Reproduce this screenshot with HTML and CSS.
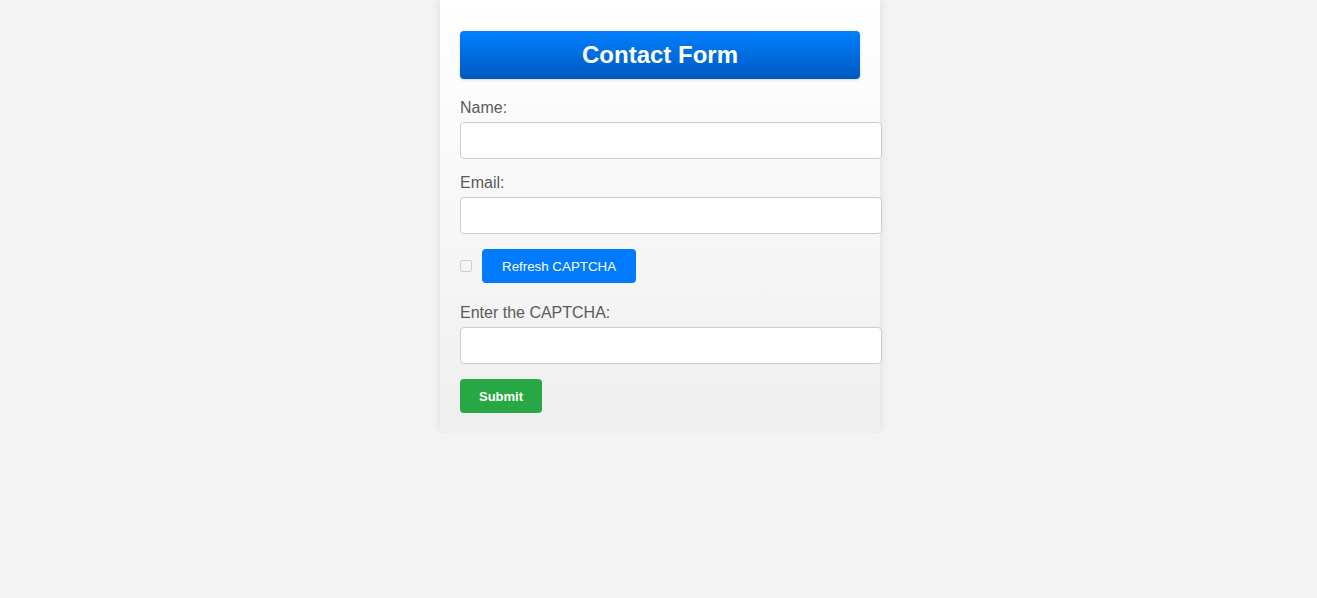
FILE: index.html
```html
<!DOCTYPE html>
<html>
<head>
<meta charset="utf-8">
<link rel="stylesheet" href="styles.css">
</head>
<body>
<div class="container">
  <h2 class="title">Contact Form</h2>
  <form class="form">
    <label class="label">Name:</label>
    <input class="field" type="text">
    <label class="label">Email:</label>
    <input class="field" type="email">
    <div class="captcha-row">
      <input class="check" type="checkbox" disabled>
      <button type="button" class="btn btn-blue">Refresh CAPTCHA</button>
    </div>
    <label class="label">Enter the CAPTCHA:</label>
    <input class="field" type="text">
    <div class="actions"><button type="button" class="btn btn-green">Submit</button></div>
  </form>
</div>
</body>
</html>
```
FILE: styles.css
```css
html, body { margin: 0; padding: 0; }
body {
  background: #f3f3f3;
  font-family: "Liberation Sans", Arial, sans-serif;
  padding-left: 3px;
}
.container {
  width: 400px;
  margin: 0 auto;
  padding: 31px 20px 20px;
  background: linear-gradient(to bottom, #ffffff, #efefef);
  border-radius: 0 0 6px 6px;
  box-shadow: 0 0 10px rgba(0,0,0,0.1);
}
.title {
  margin: 0 0 20px;
  height: 48px;
  line-height: 48px;
  text-align: center;
  color: #fff;
  font-size: 24px;
  font-weight: bold;
  border-radius: 4px;
  background: linear-gradient(to bottom, #0080ff, #0059c1);
  box-shadow: 0 1px 3px rgba(0,0,0,0.15);
}
.form { display: flex; flex-direction: column; align-items: flex-start; }
.label {
  display: block;
  font-size: 16px;
  line-height: 18px;
  color: #5a5a5a;
  margin-bottom: 5px;
}
.field {
  display: block;
  box-sizing: content-box;
  width: 400px;
  height: 15px;
  padding: 10px;
  margin: 0 0 15px;
  border: 1px solid #ccc;
  border-radius: 4px;
  background: #fff;
  font-size: 14px;
}
.captcha-row {
  display: flex;
  align-items: center;
  margin: 0 0 21px;
}
.check {
  width: 12px;
  height: 12px;
  margin: 0 10px 0 0;
}
.btn {
  border: none;
  border-radius: 4px;
  color: #fff;
  font-family: "Liberation Sans", Arial, sans-serif;
  font-size: 13.333px;
  height: 34px;
  padding: 0 20px;
}
.btn-blue { background: #007bff; }
.btn-green { background: #28a745; font-weight: bold; font-size: 13px; padding: 0; width: 82px; }
```
